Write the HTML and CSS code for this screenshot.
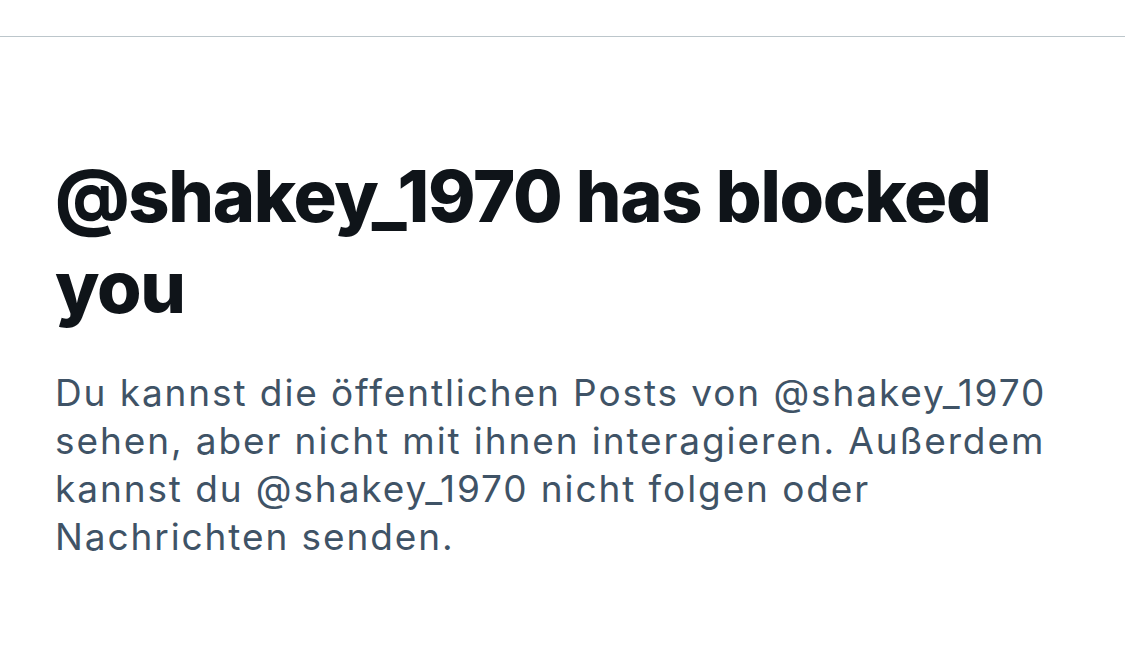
FILE: index.html
```html
<!DOCTYPE html>
<html lang="de">
<head>
<meta charset="utf-8">
<link rel="stylesheet" href="styles.css">
</head>
<body>
<div class="topbar"></div>
<main class="content">
  <h1 class="title">@shakey_1970 has blocked you</h1>
  <p class="desc">Du kannst die öffentlichen Posts von @shakey_1970 sehen, aber nicht mit ihnen interagieren. Außerdem kannst du @shakey_1970 nicht folgen oder Nachrichten senden.</p>
</main>
</body>
</html>
```

FILE: styles.css
```css
html, body {
  margin: 0;
  padding: 0;
  background: #ffffff;
}
body {
  font-family: Inter, "Noto Sans", "Liberation Sans", sans-serif;
  width: 1125px;
  height: 666px;
  overflow: hidden;
}
.topbar {
  height: 36px;
  border-bottom: 1px solid #bcc6cb;
}
.content {
  padding: 113px 55px 0 55px;
  display: flex;
  flex-direction: column;
  gap: 37px;
}
.title {
  margin: 0;
  font-size: 72px;
  line-height: 91px;
  font-weight: 800;
  color: #0f1419;
  letter-spacing: -1.3px;
}
.desc {
  margin: 0;
  font-size: 37px;
  line-height: 48px;
  font-weight: 400;
  color: #3f5366;
  letter-spacing: 1.9px;
}
```
